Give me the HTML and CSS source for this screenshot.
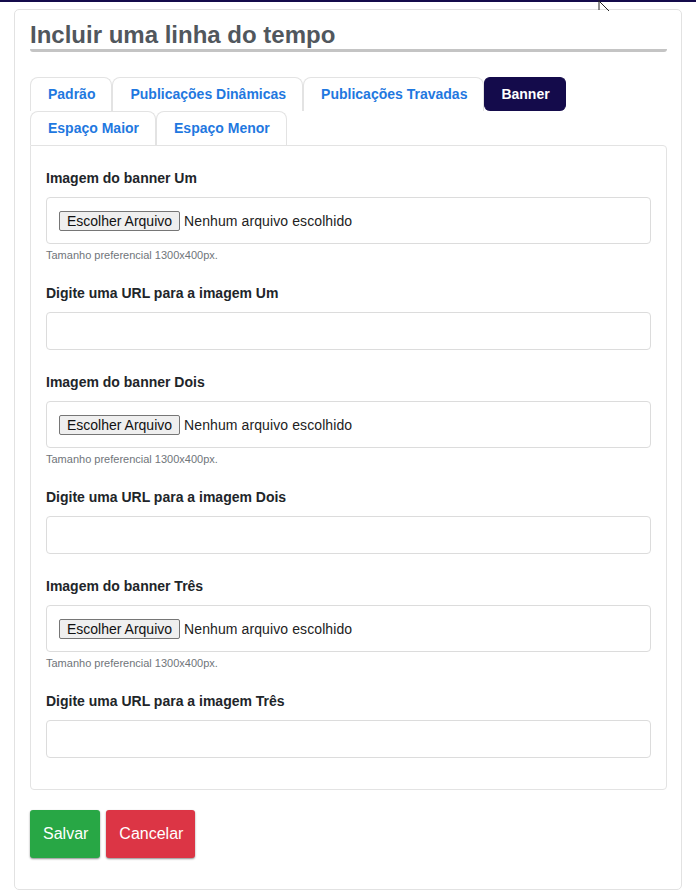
FILE: index.html
```html
<!DOCTYPE html>
<html lang="pt-br">
<head>
    <meta charset="UTF-8">
    <meta name="viewport" content="width=device-width, initial-scale=1.0">
    <title>Incluir uma linha do tempo</title>
    <link rel="stylesheet" href="styles.css">
</head>
<body>
    <div class="topbar"></div>
    <svg class="cursor" width="14" height="12" viewBox="0 0 14 12">
        <path d="M1 0 L1 10 M1 1 L11 11" stroke="#222" stroke-width="1" fill="none"/>
    </svg>

    <div class="card">
        <h2 class="card-title">Incluir uma linha do tempo</h2>

        <ul class="tabs">
            <li><a href="#">Padrão</a></li>
            <li><a href="#">Publicações Dinâmicas</a></li>
            <li><a href="#">Publicações Travadas</a></li>
            <li><a href="#" class="active">Banner</a></li>
            <li><a href="#">Espaço Maior</a></li>
            <li><a href="#">Espaço Menor</a></li>
        </ul>

        <div class="tab-panel">
            <div class="form-group">
                <label>Imagem do banner Um</label>
                <div class="file-box">
                    <button type="button" class="file-btn">Escolher Arquivo</button>
                    <span>Nenhum arquivo escolhido</span>
                </div>
                <small>Tamanho preferencial 1300x400px.</small>
            </div>
            <div class="form-group">
                <label for="urlUm">Digite uma URL para a imagem Um</label>
                <input type="text" id="urlUm">
            </div>

            <div class="form-group">
                <label>Imagem do banner Dois</label>
                <div class="file-box">
                    <button type="button" class="file-btn">Escolher Arquivo</button>
                    <span>Nenhum arquivo escolhido</span>
                </div>
                <small>Tamanho preferencial 1300x400px.</small>
            </div>
            <div class="form-group">
                <label for="urlDois">Digite uma URL para a imagem Dois</label>
                <input type="text" id="urlDois">
            </div>

            <div class="form-group">
                <label>Imagem do banner Três</label>
                <div class="file-box">
                    <button type="button" class="file-btn">Escolher Arquivo</button>
                    <span>Nenhum arquivo escolhido</span>
                </div>
                <small>Tamanho preferencial 1300x400px.</small>
            </div>
            <div class="form-group">
                <label for="urlTres">Digite uma URL para a imagem Três</label>
                <input type="text" id="urlTres">
            </div>
        </div>

        <div class="actions">
            <button type="button" class="btn btn-save">Salvar</button>
            <button type="button" class="btn btn-cancel">Cancelar</button>
        </div>
    </div>
</body>
</html>
```

FILE: styles.css
```css
body {
    font-family: "Liberation Sans", Arial, sans-serif;
    margin: 0;
    padding: 0;
    background-color: #fff;
    color: #212529;
}

.topbar {
    height: 2px;
    background-color: #140b4b;
}

.cursor {
    position: absolute;
    top: 0;
    left: 598px;
}

.card {
    margin: 7px 14px 0;
    padding: 12px 14px 31px 15px;
    border: 1px solid #e2e2e2;
    border-radius: 5px;
}

.card-title {
    margin: 0;
    padding-bottom: 1px;
    font-size: 24px;
    line-height: 26px;
    font-weight: bold;
    color: #51575d;
    border-bottom: 3px solid #c4c4c4;
    border-radius: 0 0 3px 3px;
}

.tabs {
    list-style: none;
    margin: 25px 0 0;
    padding: 0;
    display: flex;
    flex-wrap: wrap;
}

.tabs a {
    display: block;
    padding: 8px 16px 8px 17px;
    font-size: 14px;
    line-height: 17px;
    font-weight: bold;
    color: #1f78e0;
    text-decoration: none;
    border: 1px solid #e3e3e3;
    border-bottom: none;
    border-radius: 8px 8px 0 0;
}

.tabs a.active {
    padding: 8px 15px 8px 16px;
    color: #fff;
    background-color: #140b4b;
    border-color: #140b4b;
    border-radius: 6px;
}

.tab-panel {
    padding: 22px 15px 31px;
    border: 1px solid #e3e3e3;
    border-radius: 0 4px 4px 4px;
}

.form-group {
    margin-bottom: 22px;
}

.form-group:last-child {
    margin-bottom: 0;
}

label {
    display: block;
    margin-bottom: 8px;
    font-size: 14px;
    line-height: 21px;
    font-weight: bold;
}

.file-box {
    height: 47px;
    box-sizing: border-box;
    display: flex;
    align-items: center;
    padding: 0 12px;
    border: 1px solid #dcdcdc;
    border-radius: 4px;
    font-size: 14px;
    color: #222;
}

.file-btn {
    font-family: inherit;
    font-size: 14px;
    line-height: 16px;
    height: 20px;
    padding: 0 7px;
    margin-right: 4px;
    color: #111;
    background-color: #efefef;
    border: 1px solid #767676;
    border-radius: 2px;
}

.file-box span {
    letter-spacing: 0.1px;
}

small {
    display: block;
    margin-top: 3px;
    margin-bottom: 20px;
    font-size: 11px;
    line-height: 16px;
    color: #70757a;
}

.form-group:has(small) {
    margin-bottom: 0;
}

input[type="text"] {
    display: block;
    width: 100%;
    height: 38px;
    box-sizing: border-box;
    padding: 6px 12px;
    font-family: inherit;
    font-size: 16px;
    border: 1px solid #dcdcdc;
    border-radius: 4px;
}

.actions {
    display: flex;
    gap: 6px;
    margin-top: 20px;
}

.btn {
    font-family: inherit;
    font-size: 16px;
    line-height: 24px;
    padding: 12px 12px 12px 13px;
    color: #fff;
    border: none;
    border-radius: 3px;
    box-shadow: 0 1px 2px rgba(0, 0, 0, 0.45);
    cursor: pointer;
}

.btn-save {
    background-color: #28a745;
}

.btn-cancel {
    background-color: #dc3545;
}
```
